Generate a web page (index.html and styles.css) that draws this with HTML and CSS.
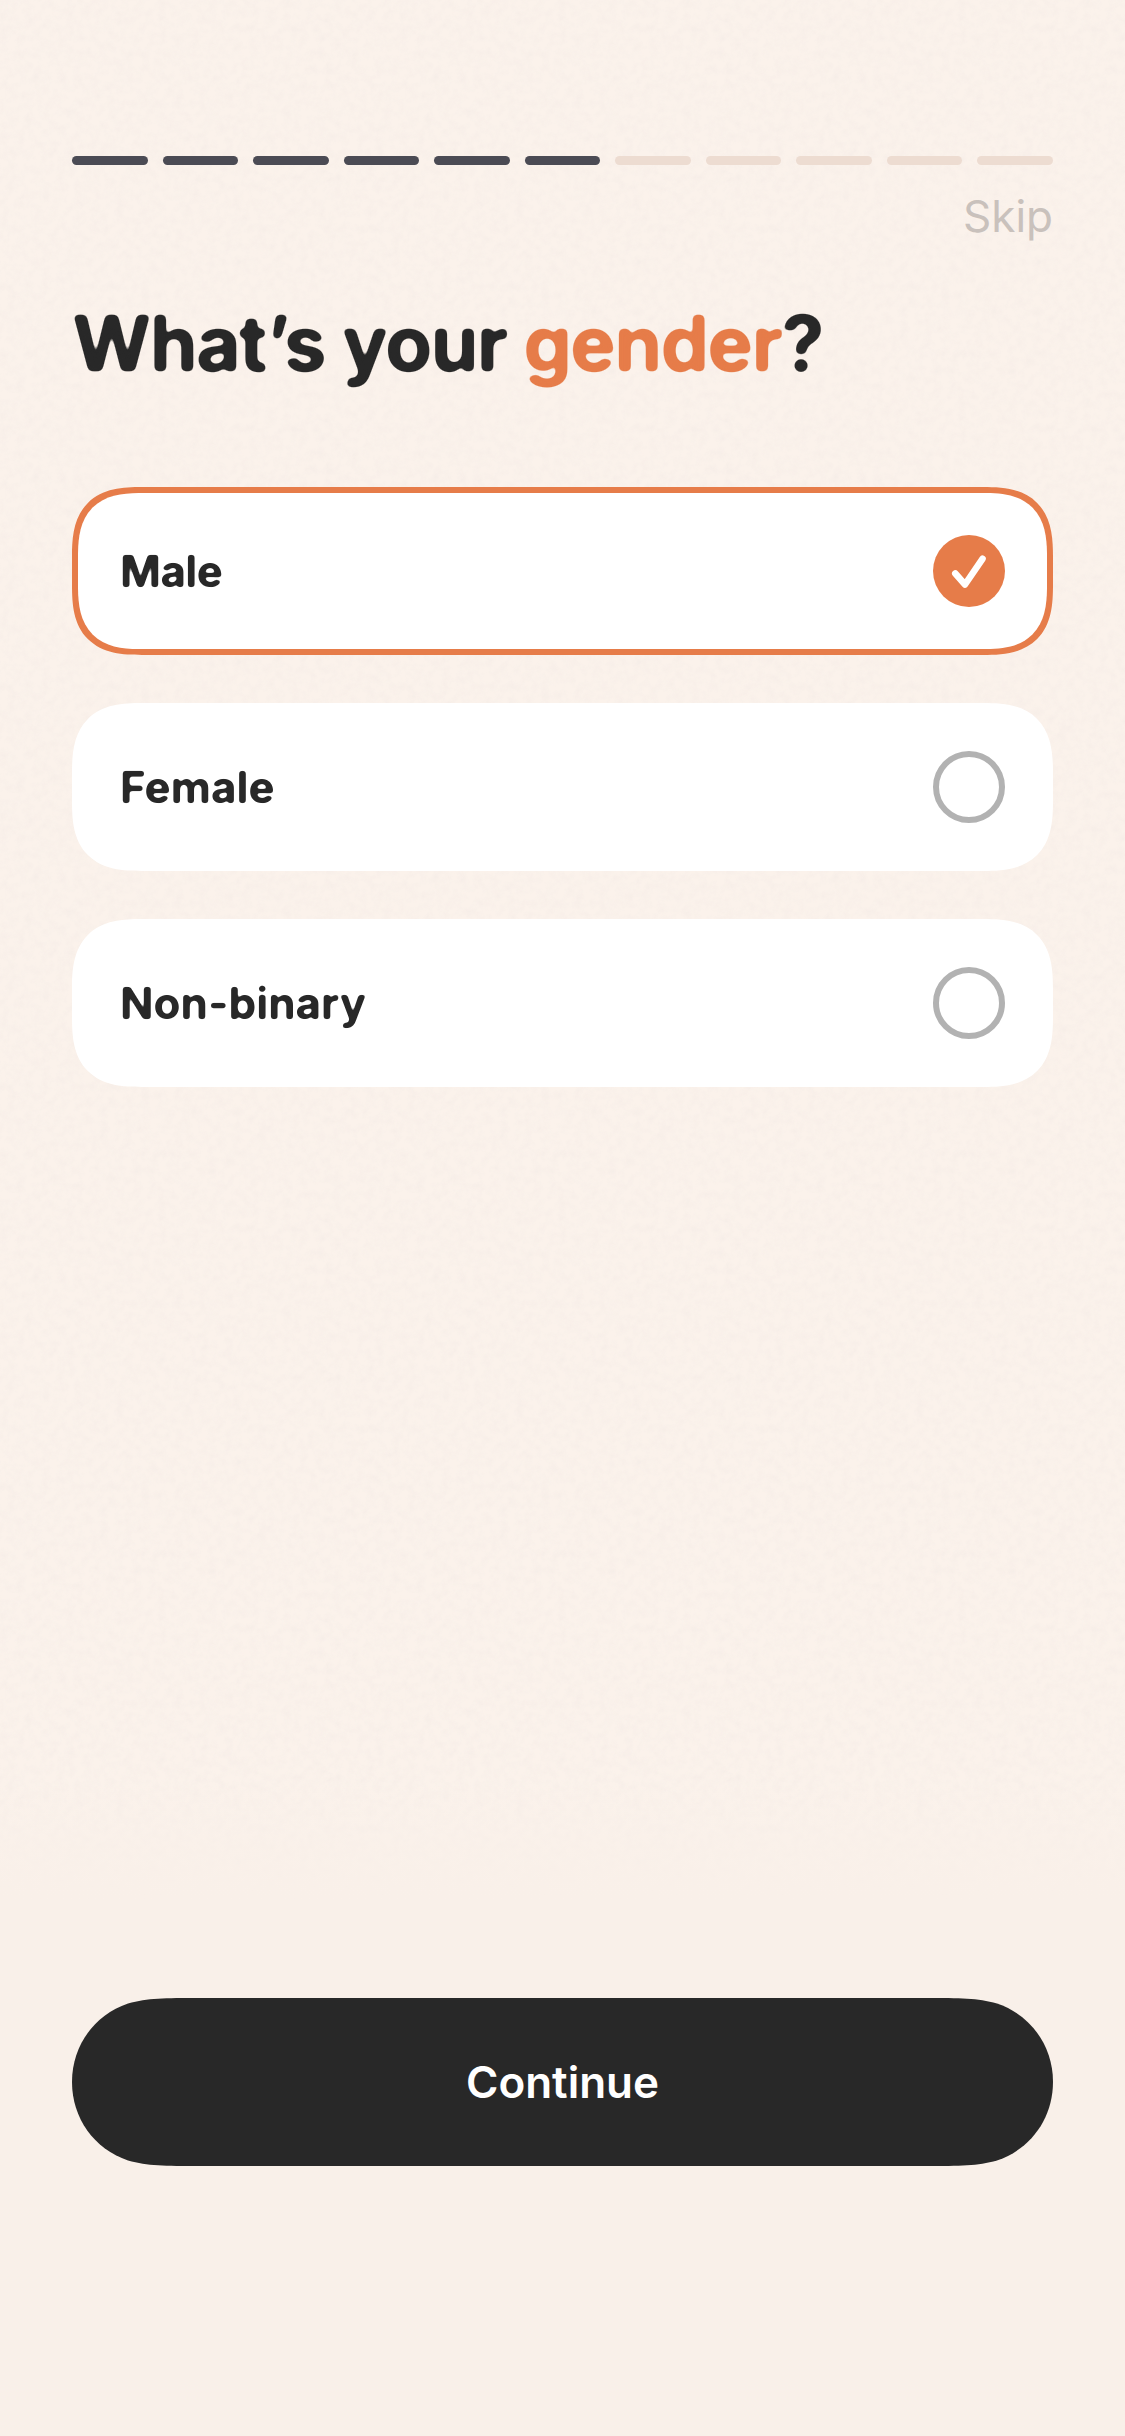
FILE: index.html
```html
<!DOCTYPE html>
<html lang="en">
<head>
<meta charset="utf-8">
<title>Your gender</title>
<link rel="stylesheet" href="styles.css">
</head>
<body>
<svg class="defs" width="0" height="0" aria-hidden="true">
  <filter id="round-lg" x="-5%" y="-10%" width="110%" height="120%" color-interpolation-filters="sRGB">
    <feGaussianBlur stdDeviation="2.4"/>
    <feComponentTransfer><feFuncA type="linear" slope="6" intercept="-2.2"/></feComponentTransfer>
  </filter>
  <filter id="round-sm" x="-5%" y="-10%" width="110%" height="120%" color-interpolation-filters="sRGB">
    <feGaussianBlur stdDeviation="1.4"/>
    <feComponentTransfer><feFuncA type="linear" slope="4" intercept="-1.4"/></feComponentTransfer>
  </filter>
</svg>
<main class="screen">
  <section class="content">
    <div class="progress">
      <span class="step done"></span><span class="step done"></span><span class="step done"></span><span class="step done"></span><span class="step done"></span><span class="step done"></span><span class="step"></span><span class="step"></span><span class="step"></span><span class="step"></span><span class="step"></span>
    </div>
    <a class="skip">Skip</a>
    <h1 class="title">What’s your <span class="accent">gender</span>?</h1>
    <div class="options">
      <div class="option selected">
        <span class="label male">Male</span>
        <svg class="check" viewBox="0 0 72 72"><circle cx="36" cy="36" r="36"/><path d="M22.3 38.5 32 49.5 49.5 23.8"/></svg>
      </div>
      <div class="option"><span class="label">Female</span><span class="radio"></span></div>
      <div class="option"><span class="label">Non-binary</span><span class="radio"></span></div>
    </div>
  </section>
  <footer class="footer"><button class="continue">Continue</button></footer>
</main>
</body>
</html>
```
FILE: styles.css
```css
* { box-sizing: border-box; }
body {
  margin: 0;
  background: #f9f0e9;
  color: #282828;
  font-family: Inter, "Liberation Sans", sans-serif;
}
.defs { position: absolute; }
.screen {
  width: 1125px;
  height: 2436px;
  display: flex;
  flex-direction: column;
}
.content {
  height: 1905px;
  padding: 156px 72px 0;
  display: flex;
  flex-direction: column;
  background-color: #fbf2eb;
  background-image:
    linear-gradient(transparent 1780px, #f9f0e9 1900px),
    url("data:image/svg+xml,%3Csvg xmlns='http://www.w3.org/2000/svg' width='400' height='400'%3E%3Cfilter id='n' x='0' y='0' width='100%25' height='100%25'%3E%3CfeTurbulence type='fractalNoise' baseFrequency='.12' numOctaves='3' stitchTiles='stitch'/%3E%3CfeColorMatrix values='0 0 0 0 .85 0 0 0 0 .79 0 0 0 0 .76 .6 0 0 0 -.22'/%3E%3C/filter%3E%3Crect width='400' height='400' filter='url(%23n)'/%3E%3C/svg%3E");
}
.progress { display: flex; gap: 15px; height: 9px; }
.step { flex: 1; border-radius: 5px; background: #eddcd1; }
.step.done { background: #4b4b54; }
.skip {
  align-self: flex-end;
  margin-top: 24px;
  height: 54px;
  font-size: 44px;
  line-height: 54px;
  color: #c9c1bc;
}
.title {
  margin: 53px 0 0;
  height: 96px;
  font-size: 76.5px;
  line-height: 95px;
  font-weight: 700;
  white-space: nowrap;
  letter-spacing: -1.4px;
  filter: url(#round-lg);
}
.accent { color: #e67c49; }
.options {
  margin-top: 95px;
  display: flex;
  flex-direction: column;
  gap: 48px;
}
.option {
  height: 168px;
  padding: 0 48px;
  display: flex;
  align-items: center;
  justify-content: space-between;
  background: #fff;
  border-radius: 52px;
}
.option.selected {
  border: 6px solid #e67c49;
  padding: 0 42px;
}
.label {
  font-size: 44px;
  font-weight: 700;
  line-height: 54px;
  filter: url(#round-sm);
}
.label.male { letter-spacing: -0.6px; }
.check { width: 72px; height: 72px; }
.check circle { fill: #e67c49; }
.check path {
  fill: none;
  stroke: #fff;
  stroke-width: 6.6;
  stroke-linecap: round;
  stroke-linejoin: round;
}
.radio {
  width: 72px;
  height: 72px;
  border: 6px solid #b2b2b2;
  border-radius: 50%;
}
.footer { padding: 93px 72px 0; display: flex; }
/* Pill whose long edges ease into the round ends */
.continue {
  flex: 1;
  height: 168px;
  border: 0;
  background: #282828;
  color: #fff;
  font: 600 44px/54px Inter, "Liberation Sans", sans-serif;
  clip-path: path("M128 0H853C889 0 905 0 925 5.5C959 17 981 48 981 84C981 120 959 151 925 162.5C905 168 889 168 853 168H128C92 168 76 168 56 162.5C22 151 0 120 0 84C0 48 22 17 56 5.5C76 0 92 0 128 0Z");
}
@supports (corner-shape: squircle) {
  .option { border-radius: 70px; corner-shape: superellipse(1.43); }
}
```
